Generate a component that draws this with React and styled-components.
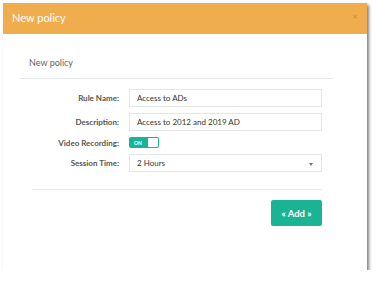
import React from "react";
import styled, { createGlobalStyle } from "styled-components";

const GlobalStyle = createGlobalStyle`
  body {
    margin: 0;
    background: #fff;
    font-family: Lato, "Open Sans", sans-serif;
  }
`;

const Modal = styled.div`
  margin: 3px 0 0 3px;
  width: 364px;
  height: 267px;
  background: #fff;
  box-shadow: 2px 2px 3px rgba(0, 0, 0, 0.5);
  display: flex;
  flex-direction: column;
`;

const Header = styled.div`
  height: 31px;
  background: #f0ad4e;
  display: flex;
  align-items: center;
  justify-content: space-between;
  padding: 0 9px 2px 9px;
  box-sizing: border-box;
`;

const Title = styled.div`
  color: #fff;
  font-size: 11px;
`;

const Close = styled.span`
  color: rgba(0, 0, 0, 0.2);
  font-size: 10px;
  margin-top: -3px;
`;

const Body = styled.div`
  display: flex;
  flex-direction: column;
`;

const Subtitle = styled.div`
  color: #666;
  font-size: 9px;
  padding: 23px 0 0 26px;
  line-height: 12px;
`;

const Divider = styled.div`
  height: 1px;
  background: #e7eaec;
  margin: ${({ m }) => m};
`;

const Form = styled.div`
  display: grid;
  grid-template-columns: 116px 193px;
  column-gap: 10px;
  row-gap: 6px;
  align-items: center;
`;

const Label = styled.label`
  text-align: right;
  font-size: 8px;
  font-weight: 700;
  color: #555;
`;

const Input = styled.div`
  height: 16px;
  border: 1px solid #e5e6e7;
  display: flex;
  align-items: center;
  justify-content: space-between;
  padding: 0 8px 0 7px;
  font-size: 8px;
  color: #333;
`;

const Toggle = styled.div`
  width: 30px;
  height: 11px;
  background: #1ab394;
  border-radius: 2px;
  display: flex;
  align-items: center;
  justify-content: space-between;
  padding: 1px;
  box-sizing: border-box;
`;

const ToggleText = styled.span`
  color: #fff;
  font-size: 5px;
  font-weight: 700;
  padding-left: 4px;
`;

const Knob = styled.span`
  width: 10px;
  height: 9px;
  background: #fff;
  border-radius: 1px;
`;

const ToggleCell = styled.div`
  display: flex;
`;

const Caret = styled.span`
  width: 0;
  height: 0;
  border-left: 2px solid transparent;
  border-right: 2px solid transparent;
  border-top: 3px solid #777;
  margin-top: 2px;
`;

const Footer = styled.div`
  display: flex;
  justify-content: flex-end;
  padding-right: 45px;
`;

const AddButton = styled.button`
  width: 51px;
  height: 26px;
  border: none;
  border-radius: 2px;
  background: #1ab394;
  color: #fff;
  font-family: Lato, sans-serif;
  font-size: 9.5px;
  font-weight: 700;
  padding: 0;
`;

export default function App() {
  return (
    <>
      <GlobalStyle />
      <Modal>
        <Header>
          <Title>New policy</Title>
          <Close>×</Close>
        </Header>
        <Body>
          <Subtitle>New policy</Subtitle>
          <Divider m="9px 34px 10px 17px" />
          <Form>
            <Label>Rule Name:</Label>
            <Input>Access to ADs</Input>
            <Label>Description:</Label>
            <Input>Access to 2012 and 2019 AD</Input>
            <Label>Video Recording:</Label>
            <ToggleCell>
              <Toggle>
                <ToggleText>ON</ToggleText>
                <Knob />
              </Toggle>
            </ToggleCell>
            <Label>Session Time:</Label>
            <Input>
              2 Hours
              <Caret />
            </Input>
          </Form>
          <Divider m="17px 45px 10px 29px" />
          <Footer>
            <AddButton>« Add »</AddButton>
          </Footer>
        </Body>
      </Modal>
    </>
  );
}
